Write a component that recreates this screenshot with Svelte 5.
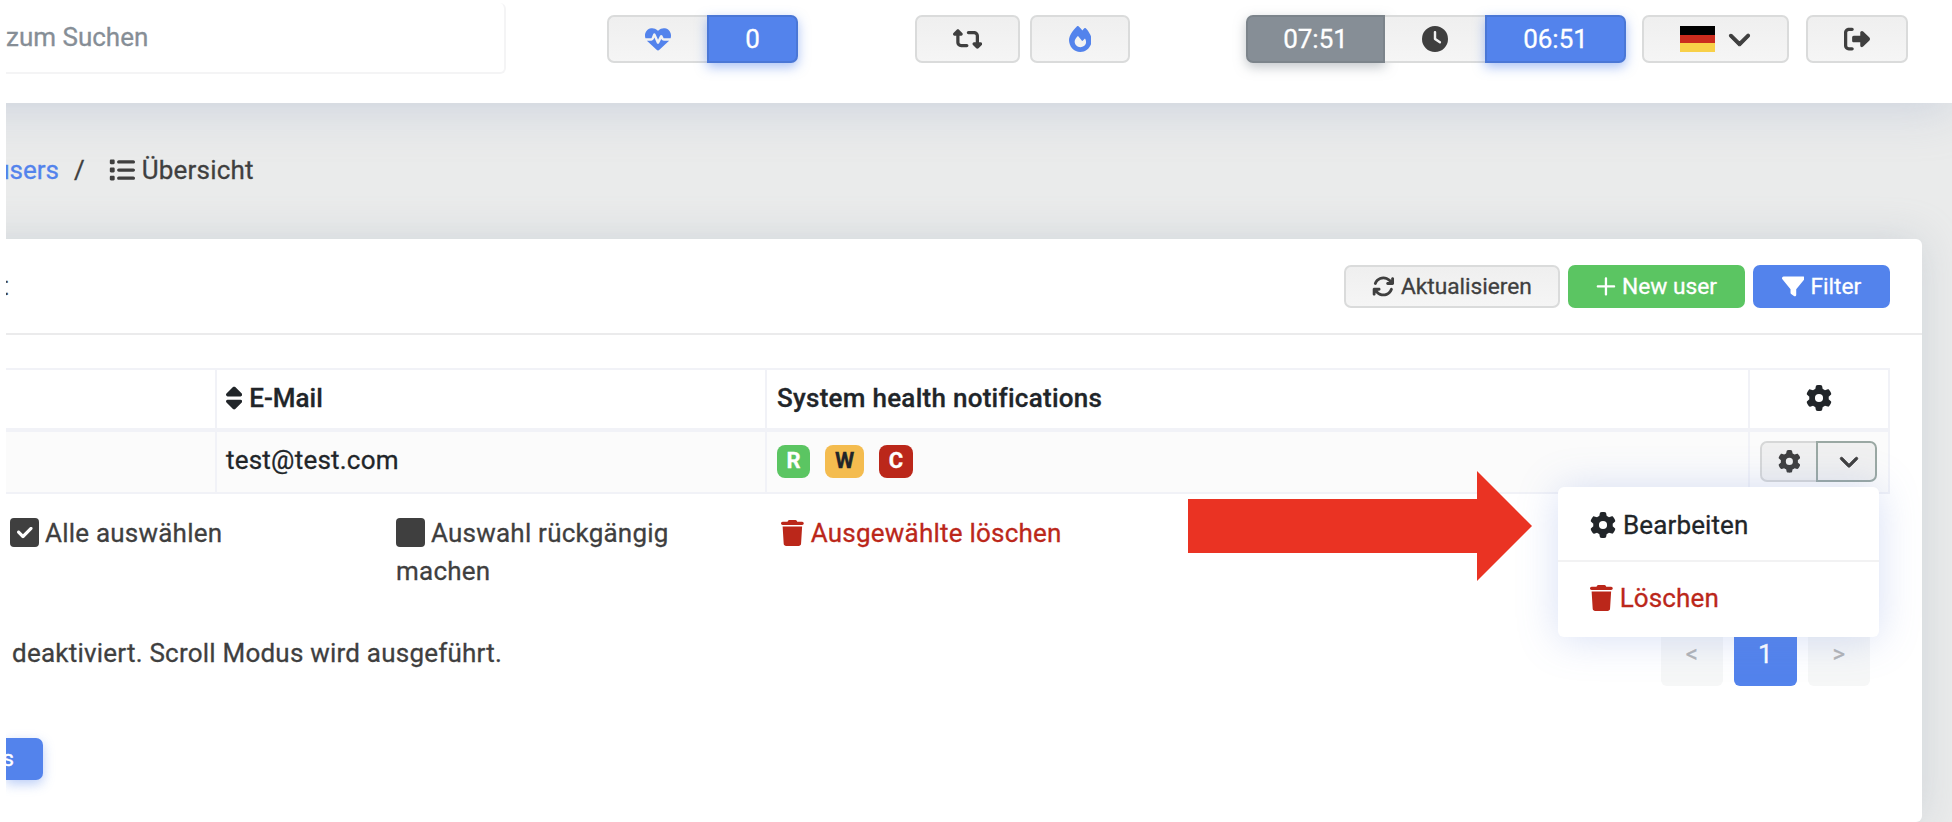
<script>
  const icons = {
    gear: [512, 'M495.9 166.6c3.2 8.7 .5 18.4-6.4 24.6l-43.3 39.4c1.1 8.3 1.7 16.8 1.7 25.4s-.6 17.1-1.7 25.4l43.3 39.4c6.9 6.2 9.6 15.9 6.4 24.6c-4.4 11.9-9.7 23.3-15.8 34.3l-4.7 8.1c-6.6 11-14 21.4-22.1 31.2c-5.9 7.2-15.7 9.6-24.5 6.8l-55.7-17.7c-13.4 10.3-28.2 18.9-44 25.4l-12.5 57.1c-2 9.1-9 16.3-18.2 17.8c-13.8 2.3-28 3.5-42.5 3.5s-28.7-1.2-42.5-3.5c-9.2-1.5-16.2-8.7-18.2-17.8l-12.5-57.1c-15.8-6.5-30.6-15.1-44-25.4L83.1 425.9c-8.8 2.8-18.6 .3-24.5-6.8c-8.1-9.8-15.5-20.2-22.1-31.2l-4.7-8.1c-6.1-11-11.4-22.4-15.8-34.3c-3.2-8.7-.5-18.4 6.4-24.6l43.3-39.4C64.6 273.1 64 264.6 64 256s.6-17.1 1.7-25.4L22.4 191.2c-6.9-6.2-9.6-15.9-6.4-24.6c4.4-11.9 9.7-23.3 15.8-34.3l4.7-8.1c6.6-11 14-21.4 22.1-31.2c5.9-7.2 15.7-9.6 24.5-6.8l55.7 17.7c13.4-10.3 28.2-18.9 44-25.4l12.5-57.1c2-9.1 9-16.3 18.2-17.8C227.3 1.2 241.5 0 256 0s28.7 1.2 42.5 3.5c9.2 1.5 16.2 8.7 18.2 17.8l12.5 57.1c15.8 6.5 30.6 15.1 44 25.4l55.7-17.7c8.8-2.8 18.6-.3 24.5 6.8c8.1 9.8 15.5 20.2 22.1 31.2l4.7 8.1c6.1 11 11.4 22.4 15.8 34.3zM256 336a80 80 0 1 0 0-160 80 80 0 1 0 0 160z'],
    trash: [448, 'M135.2 17.7L128 32H32C14.3 32 0 46.3 0 64S14.3 96 32 96H416c17.7 0 32-14.3 32-32s-14.3-32-32-32H320l-7.2-14.3C307.4 6.8 296.3 0 284.2 0H163.8c-12.1 0-23.2 6.8-28.6 17.7zM416 128H32L53.2 467c1.6 25.3 22.6 45 47.9 45H346.9c25.3 0 46.3-19.7 47.9-45L416 128z'],
    clock: [512, 'M256 0a256 256 0 1 1 0 512A256 256 0 1 1 256 0zM232 120V256c0 8 4 15.5 10.7 20l96 64c11 7.4 25.9 4.4 33.3-6.7s4.4-25.9-6.7-33.3L280 243.2V120c0-13.3-10.7-24-24-24s-24 10.7-24 24z'],
    chevron: [512, 'M233.4 406.6c12.5 12.5 32.8 12.5 45.3 0l192-192c12.5-12.5 12.5-32.8 0-45.3s-32.8-12.5-45.3 0L256 338.7 86.6 169.4c-12.5-12.5-32.8-12.5-45.3 0s-12.5 32.8 0 45.3l192 192z'],
    logout: [512, 'M377.9 105.9L500.7 228.7c7.2 7.2 11.3 17.1 11.3 27.3s-4.1 20.1-11.3 27.3L377.9 406.1c-6.4 6.4-15 9.9-24 9.9c-18.7 0-33.9-15.2-33.9-33.9l0-62.1-128 0c-17.7 0-32-14.3-32-32l0-64c0-17.7 14.3-32 32-32l128 0 0-62.1c0-18.7 15.2-33.9 33.9-33.9c9 0 17.6 3.6 24 9.9zM160 96L96 96c-17.7 0-32 14.3-32 32l0 256c0 17.7 14.3 32 32 32l64 0c17.7 0 32 14.3 32 32s-14.3 32-32 32l-64 0c-53 0-96-43-96-96L0 128C0 75 43 32 96 32l64 0c17.7 0 32 14.3 32 32s-14.3 32-32 32z'],
    filter: [512, 'M3.9 54.9C10.5 40.9 24.5 32 40 32H472c15.5 0 29.5 8.9 36.1 22.9s4.6 30.5-5.2 42.5L320 320.9V448c0 12.1-6.8 23.2-17.7 28.6s-23.8 4.3-33.5-3l-64-48c-8.1-6-12.8-15.5-12.8-25.6V320.9L9 97.3C-.7 85.4-2.8 68.8 3.9 54.9z'],
    rotate: [512, 'M105.1 202.6c7.7-21.8 20.2-42.3 37.8-59.8c62.5-62.5 163.8-62.5 226.3 0L386.3 160H352c-17.7 0-32 14.3-32 32s14.3 32 32 32H463.5c17.7 0 32-14.3 32-32V80c0-17.7-14.3-32-32-32s-32 14.3-32 32v35.2L414.4 97.6c-87.5-87.5-229.3-87.5-316.8 0C73.2 122 55.6 150.7 44.8 181.4c-5.9 16.7 2.9 34.9 19.5 40.8s34.9-2.9 40.8-19.5zM39 289.3c-5 1.5-9.8 4.2-13.7 8.2c-4 4-6.7 8.8-8.1 14c-.3 1.2-.6 2.5-.8 3.8c-.3 1.7-.4 3.4-.4 5.1V432c0 17.7 14.3 32 32 32s32-14.3 32-32V396.9l17.6 17.5c87.5 87.4 229.3 87.4 316.7 0c24.4-24.4 42.1-53.1 52.9-83.7c5.9-16.7-2.9-34.9-19.5-40.8s-34.9 2.9-40.8 19.5c-7.7 21.8-20.2 42.3-37.8 59.8c-62.5 62.5-163.8 62.5-226.3 0l-.1-.1L125.6 352H160c17.7 0 32-14.3 32-32s-14.3-32-32-32H48.4c-1.6 0-3.2 .1-4.8 .3s-3.1 .5-4.6 1z'],
    retweet: [576, 'M272 416c17.7 0 32-14.3 32-32s-14.3-32-32-32H160c-17.7 0-32-14.3-32-32V192h32c12.9 0 24.6-7.8 29.6-19.8s2.2-25.7-6.9-34.9l-64-64c-12.5-12.5-32.8-12.5-45.3 0l-64 64c-9.2 9.2-11.9 22.9-6.9 34.9s16.6 19.8 29.6 19.8l32 0 0 128c0 53 43 96 96 96H272zM304 96c-17.7 0-32 14.3-32 32s14.3 32 32 32l112 0c17.7 0 32 14.3 32 32l0 128H416c-12.9 0-24.6 7.8-29.6 19.8s-2.2 25.7 6.9 34.9l64 64c12.5 12.5 32.8 12.5 45.3 0l64-64c9.2-9.2 11.9-22.9 6.9-34.9s-16.6-19.8-29.6-19.8l-32 0V192c0-53-43-96-96-96L304 96z'],
    fire: [448, 'M159.3 5.4c7.8-7.3 19.9-7.2 27.7 .1c27.6 25.9 53.5 53.8 77.7 84c11-14.4 23.5-30.1 37-42.9c7.9-7.4 20.1-7.4 28 .1c34.6 33 63.9 76.6 84.5 118c20.3 40.8 33.8 82.5 33.8 111.9C448 404.2 348.2 512 224 512C98.4 512 0 404.1 0 276.5c0-38.4 17.8-85.3 45.4-131.7C73.3 97.7 112.7 48.6 159.3 5.4zM225.7 416c25.3 0 47.7-7 68.8-21c42.1-29.4 53.4-88.2 28.1-134.4c-4.5-9-16-9.6-22.5-2l-25.2 29.3c-6.6 7.6-18.5 7.4-24.7-.5c-16.5-21-46-58.5-62.8-79.8c-6.3-8-18.3-8.1-24.7-.1c-33.8 42.5-50.8 69.3-50.8 99.4C112 375.4 162.6 416 225.7 416z'],
    heart: [512, 'M228.3 469.1L47.6 300.4c-4.2-3.9-8.2-8.1-11.9-12.4h87c22.6 0 43-13.6 51.7-34.5l10.5-25.2 49.3 109.5c3.8 8.5 12.1 14 21.4 14.1s17.8-5 22-13.3L320 253.7l1.7 3.4c9.5 19 28.9 31 50.1 31H476.3c-3.7 4.3-7.7 8.5-11.9 12.4L283.7 469.1c-7.5 7-17.4 10.9-27.7 10.9s-20.2-3.9-27.7-10.9zM503.7 240h-132c-3 0-5.8-1.7-7.2-4.4l-23.2-46.3c-4.1-8.1-12.4-13.3-21.5-13.3s-17.4 5.1-21.5 13.3l-41.4 82.8L205.9 158.2c-3.9-8.7-12.7-14.3-22.2-14.1s-18.1 5.9-21.8 14.8l-31.8 76.3c-1.2 3-4.2 4.9-7.4 4.9H16c-2.6 0-5 .4-7.3 1.1C3 225.2 0 208.2 0 190.9v-5.8c0-69.9 50.5-129.5 119.4-141C165 36.5 211.4 51.4 244 84l12 12 12-12c32.6-32.6 79-47.5 124.6-39.9C461.5 55.6 512 115.2 512 185.1v5.8c0 16.9-2.8 33.5-8.3 49.1z'],
    sort: [320, 'M137.4 41.4c12.5-12.5 32.8-12.5 45.3 0l128 128c9.2 9.2 11.9 22.9 6.9 34.9s-16.6 19.8-29.6 19.8H32c-12.9 0-24.6-7.8-29.6-19.8s-2.2-25.7 6.9-34.9l128-128zm0 429.3l-128-128c-9.2-9.2-11.9-22.9-6.9-34.9s16.6-19.8 29.6-19.8H288c12.9 0 24.6 7.8 29.6 19.8s2.2 25.7-6.9 34.9l-128 128c-12.5 12.5-32.8 12.5-45.3 0z'],
    list: [512, 'M40 48C26.7 48 16 58.7 16 72v48c0 13.3 10.7 24 24 24H88c13.3 0 24-10.7 24-24V72c0-13.3-10.7-24-24-24H40zM192 64c-17.7 0-32 14.3-32 32s14.3 32 32 32H480c17.7 0 32-14.3 32-32s-14.3-32-32-32H192zm0 160c-17.7 0-32 14.3-32 32s14.3 32 32 32H480c17.7 0 32-14.3 32-32s-14.3-32-32-32H192zm0 160c-17.7 0-32 14.3-32 32s14.3 32 32 32H480c17.7 0 32-14.3 32-32s-14.3-32-32-32H192zM16 232v48c0 13.3 10.7 24 24 24H88c13.3 0 24-10.7 24-24V232c0-13.3-10.7-24-24-24H40c-13.3 0-24 10.7-24 24zM40 368c-13.3 0-24 10.7-24 24v48c0 13.3 10.7 24 24 24H88c13.3 0 24-10.7 24-24V392c0-13.3-10.7-24-24-24H40z'],
    plus: [448, 'M250 74c0-14-12-26-26-26s-26 12-26 26V230H42c-14 0-26 12-26 26s12 26 26 26H198V438c0 14 12 26 26 26s26-12 26-26V282H406c14 0 26-12 26-26s-12-26-26-26H250V74z'],
    check: [512, 'M70 0H442a70 70 0 0 1 70 70V442a70 70 0 0 1-70 70H70a70 70 0 0 1-70-70V70A70 70 0 0 1 70 0zM391 204c11-11 11-28 0-39s-28-11-39 0L229 289l-58-59c-11-11-28-11-39 0s-11 28 0 39l77 79c11 11 29 11 40 0z'],
    square: [512, 'M70 0H442a70 70 0 0 1 70 70V442a70 70 0 0 1-70 70H70a70 70 0 0 1-70-70V70A70 70 0 0 1 70 0z'],
  };
  const badges = [
    { letter: 'R', kind: 'ok' },
    { letter: 'W', kind: 'warn' },
    { letter: 'C', kind: 'crit' },
  ];
</script>

{#snippet icon(name, size)}
  <svg class="icon {name}" width={(size * icons[name][0]) / 512} height={size} viewBox="0 0 {icons[name][0]} 512">
    <path d={icons[name][1]} fill="currentColor" fill-rule="evenodd" />
  </svg>
{/snippet}

<div class="page">
  <div class="app">
    <header class="topbar">
      <div class="search">zum Suchen</div>
      <div class="group health">
        <button class="btn b-heart">{@render icon('heart', 26)}</button>
        <button class="btn blue b-zero">0</button>
      </div>
      <button class="btn b-sync">{@render icon('retweet', 26)}</button>
      <button class="btn b-fire">{@render icon('fire', 26)}</button>
      <div class="group clocks">
        <button class="btn gray b-local">07:51</button>
        <button class="btn b-clock">{@render icon('clock', 26)}</button>
        <button class="btn blue b-utc">06:51</button>
      </div>
      <button class="btn b-lang">
        <span class="flag"><i></i><i></i><i></i></span>
        {@render icon('chevron', 23)}
      </button>
      <button class="btn b-out">{@render icon('logout', 26)}</button>
    </header>

    <nav class="crumbs">
      <a class="crumb-link" href="#users">users</a>
      <span class="slash">/</span>
      <span class="current">{@render icon('list', 26)}<span>Übersicht</span></span>
    </nav>

    <main class="panel">
      <div class="panel-head">
        <span class="title">t</span>
        <div class="actions">
          <button class="act refresh">{@render icon('rotate', 22.75)}Aktualisieren</button>
          <button class="act new">{@render icon('plus', 22.75)}New user</button>
          <button class="act filter-btn">{@render icon('filter', 22.75)}Filter</button>
        </div>
      </div>

      <div class="grid">
        <div class="row head">
          <div class="cell"></div>
          <div class="cell">{@render icon('sort', 26)}<span class="sorted">E-Mail</span></div>
          <div class="cell wide">System health notifications</div>
          <div class="cell tools">{@render icon('gear', 26)}</div>
        </div>
        <div class="row body">
          <div class="cell"></div>
          <div class="cell mail">test@test.com</div>
          <div class="cell wide badges">
            {#each badges as b}<span class="badge {b.kind}">{b.letter}</span>{/each}
          </div>
          <div class="cell ops">
            <div class="split">
              <button class="op">{@render icon('gear', 22.75)}</button>
              <button class="op open">{@render icon('chevron', 20)}</button>
              <div class="menu">
                <div class="item">{@render icon('gear', 26)}<span>Bearbeiten</span></div>
                <div class="item danger">{@render icon('trash', 26)}<span>Löschen</span></div>
              </div>
            </div>
          </div>
        </div>
      </div>

      <div class="bulk">
        <div class="b1">{@render icon('check', 29)}<span>Alle auswählen</span></div>
        <div class="b2">{@render icon('square', 29)}<span>Auswahl rückgängig machen</span></div>
        <div class="b3">{@render icon('trash', 26)}<span>Ausgewählte löschen</span></div>
      </div>

      <div class="foot">
        <p>deaktiviert. Scroll Modus wird ausgeführt.</p>
        <div class="pages">
          <span class="pg">&lt;</span>
          <span class="pg on">1</span>
          <span class="pg">&gt;</span>
        </div>
      </div>

      <button class="act more">s</button>
    </main>
  </div>

  <svg class="arrow" width="344" height="110" viewBox="0 0 344 110">
    <path d="M0 28H289V0L344 55L289 110V82H0z" fill="#ea3323" />
  </svg>
</div>

<style>
  :global(body) { margin: 0; background: #fff; }
  .page {
    position: relative; box-sizing: border-box; width: 1952px; height: 822px; overflow: hidden;
    padding-left: 6px; background: #fff; font: 400 26px/38px Roboto, sans-serif; color: #3f3f3f;
    -webkit-text-stroke: .3px currentColor;
  }
  .app { height: 822px; overflow: hidden; background: #eaebeb; }
  .icon { flex: none; display: block; }
  .icon.chevron { stroke: currentColor; stroke-width: 24; }
  button { font: inherit; box-sizing: border-box; margin: 0; padding: 0; color: inherit; display: flex; align-items: center; justify-content: center; }

  .topbar {
    position: relative; display: flex; align-items: flex-start; box-sizing: border-box; height: 103px;
    margin-left: -80px; padding: 15px 0 0 80px; background: #fff; box-shadow: 0 4px 50px rgba(158, 172, 200, .42);
  }
  .search {
    box-sizing: border-box; width: 500px; height: 71px; margin-top: -12px; border: solid #f4f4f5; border-width: 0 2px 2px 0;
    border-radius: 0 6px 6px 0; line-height: 69px; color: #868e96;
  }
  .btn { height: 48px; border: 2px solid #dadbdb; border-radius: 7px; background: linear-gradient(#efefef, #f5f5f5); }
  .group { display: flex; }
  .health { margin-left: 101px; }
  .b-heart { width: 100px; border-right: 0; border-radius: 7px 0 0 7px; color: #5383ec; }
  .blue { background: #5383ec; border-color: #4a77d6; color: #fff; box-shadow: 0 4px 12px rgba(83, 131, 236, .5); }
  .gray { background: #868e96; border-color: #7c848b; color: #fff; box-shadow: 0 4px 12px rgba(134, 142, 150, .5); }
  .b-zero { width: 91px; border-radius: 0 7px 7px 0; }
  .b-sync { width: 105px; margin-left: 117px; }
  .b-fire { width: 100px; margin-left: 10px; color: #5383ec; }
  .clocks { margin-left: 116px; }
  .b-local { width: 139px; border-radius: 7px 0 0 7px; }
  .b-clock { width: 100px; border-width: 2px 0; border-radius: 0; }
  .b-utc { width: 141px; border-radius: 0 7px 7px 0; }
  .b-lang { width: 147px; margin-left: 16px; gap: 13px; }
  .b-lang .icon { margin-top: -2px; }
  .b-out { width: 102px; margin-left: 17px; }
  .flag { display: flex; flex-direction: column; width: 35px; height: 26px; }
  .flag i { flex: 1; background: #000; }
  .flag i:nth-child(2) { background: #cb2b1d; }
  .flag i:nth-child(3) { background: #f8d048; }

  .crumbs { display: flex; align-items: center; height: 136px; box-sizing: border-box; padding-bottom: 2px; position: relative; }
  .crumb-link { width: 53px; display: flex; justify-content: flex-end; color: #5383ec; text-decoration: none; }
  .slash { margin-left: 15px; }
  .current { display: flex; align-items: center; gap: 7px; margin-left: 24px; letter-spacing: .2px; }

  .panel {
    position: relative; box-sizing: border-box; width: 1996px; height: 583px; margin-left: -80px; padding-left: 80px; background: #fff;
    border-radius: 0 6px 6px 0; box-shadow: 0 0 40px rgba(150, 165, 180, .32); letter-spacing: .22px;
  }
  .panel-head {
    display: flex; justify-content: space-between; box-sizing: border-box; height: 96px; padding: 26px 32px 0 0;
    border-bottom: 2px solid #ebebec;
  }
  .title { margin-left: -6px; line-height: 42px; }
  .actions { display: flex; gap: 8px; letter-spacing: 0; }
  .act {
    gap: 6px; height: 43px; border: 2px solid #dadbdb; border-radius: 7px;
    background: linear-gradient(#efefef, #f5f5f5); font-size: 22.75px; font-weight: 400;
  }
  .refresh { width: 216px; letter-spacing: -.05px; }
  .new { width: 177px; background: #5bc562; border-color: #5bc562; color: #fff; }
  .filter-btn { width: 137px; background: #5383ec; border-color: #5383ec; color: #fff; }

  .grid { margin-top: 33px; width: 1884px; box-sizing: border-box; border: solid #f1f2f7; border-width: 2px 2px 2px 0; color: #212529; }
  .row { display: grid; grid-template-columns: 209px 550px 983px 1fr; }
  .head { height: 62px; box-sizing: border-box; border-bottom: 4px solid #f1f2f7; font-weight: 500; }
  .head .cell { padding-bottom: 2px; }
  .body { height: 60px; background: #fbfbfb; }
  .cell { display: flex; align-items: center; padding-left: 9px; border-left: 2px solid #f1f2f7; }
  .cell:first-child { border-left: 0; }
  .cell.wide { padding-left: 10px; }
  .head .wide { letter-spacing: .27px; }
  .mail { padding-bottom: 4px; }
  .badges { padding-bottom: 2px; }
  .sorted { margin-left: 7px; letter-spacing: 0; }
  .cell.tools { justify-content: center; padding-left: 0; }
  .badge { display: flex; align-items: center; justify-content: center; height: 33px; border-radius: 8px; font-size: 22px; font-weight: 700; color: #fff; letter-spacing: 0; }
  .ok { width: 33px; background: #5bc562; }
  .warn { width: 39px; margin-left: 15px; background: #f4bc4f; color: #212529; }
  .crit { width: 34px; margin-left: 15px; background: #bb271a; }
  .split { position: relative; display: flex; height: 41px; margin-bottom: 1px; margin-left: 1px; }
  .op { width: 56px; border: 2px solid #d6d7d7; border-right: 0; border-radius: 7px 0 0 7px; background: #f0f0f0; color: #3f3f3f; }
  .op.open { width: 61px; padding-left: 5px; border: 2px solid #9aa8a3; border-radius: 0 7px 7px 0; }
  .op.open .icon { margin-top: -2px; }
  .menu {
    position: absolute; top: 46px; right: -2px; z-index: 2; box-sizing: border-box; width: 321px; height: 150px;
    border-radius: 6px; background: #fff; box-shadow: 0 2px 40px rgba(100, 130, 215, .26);
  }
  .item { display: flex; align-items: center; gap: 7px; box-sizing: border-box; height: 75px; padding: 0 0 3px 32px; color: #212529; letter-spacing: .12px; }
  .item:first-child { border-bottom: 2px solid #f2f2f3; padding: 3px 0 0 32px; }
  .item.danger { color: #bb271a; }

  .bulk { display: grid; grid-template-columns: 390px 385px 1fr; height: 76px; margin-top: 20px; }
  .bulk > div { display: flex; align-items: flex-start; }
  .bulk .b1 { gap: 6px; }
  .bulk .b3 { gap: 7px; }
  .b1 { padding-left: 4px; }
  .bulk .b2 { display: block; width: 290px; }
  .b2 .icon { display: inline-block; vertical-align: -5px; margin-right: 6px; }
  .b1 .icon { margin-top: 4px; }
  .b3 .icon { margin-top: 6px; }
  .b3 { color: #bb271a; }

  .foot { display: flex; justify-content: space-between; align-items: flex-start; padding: 34px 52px 0 6px; height: 73px; }
  .foot p { margin: 10px 0 0; }
  .pages { display: flex; gap: 11px; }
  .pg { width: 62px; height: 62px; border-radius: 6px; background: #f6f7f7; color: #b3b4b5; text-align: center; line-height: 60px; font-size: 24px; }
  .pg.on { width: 63px; background: #5383ec; color: #fff; font-size: 26px; }
  .more { width: 37px; height: 42px; margin-top: 41px; border: 0; border-radius: 0 7px 7px 0; justify-content: flex-end; padding-right: 29px; background: #5383ec; color: #fff; box-shadow: 0 4px 12px rgba(83, 131, 236, .4); }

  .arrow { position: absolute; left: 1188px; top: 471px; z-index: 3; }
</style>
